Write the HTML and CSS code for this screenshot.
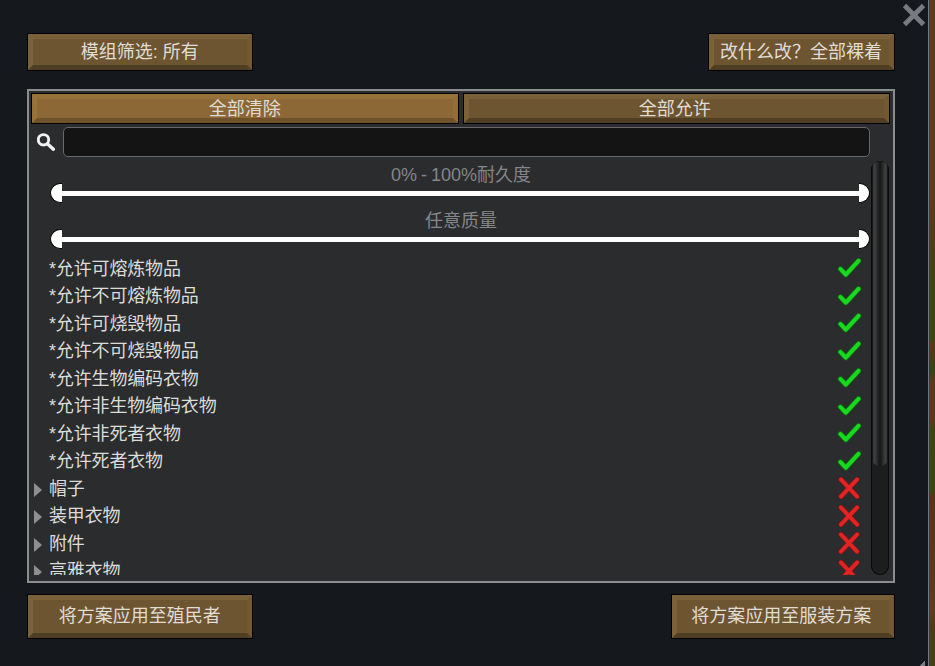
FILE: index.html
```html
<!DOCTYPE html>
<html lang="zh">
<head>
<meta charset="utf-8">
<title>服装筛选</title>
<link rel="stylesheet" href="styles.css">
</head>
<body>
<svg class="defs" width="0" height="0" aria-hidden="true">
  <symbol id="check" viewBox="0 0 24 22">
    <path d="M3.5 12 L8.8 17.6 L21.5 3.8" fill="none" stroke="#0d6a12" stroke-width="5.6" stroke-linecap="round" stroke-linejoin="round"/>
    <path d="M3.5 12 L8.8 17.6 L21.5 3.8" fill="none" stroke="#1ad81f" stroke-width="4" stroke-linecap="round" stroke-linejoin="round"/>
  </symbol>
  <symbol id="cross" viewBox="0 0 24 22">
    <path d="M4 2.5 L20 19.5 M20 2.5 L4 19.5" fill="none" stroke="#861616" stroke-width="5.2" stroke-linecap="round"/>
    <path d="M4 2.5 L20 19.5 M20 2.5 L4 19.5" fill="none" stroke="#e32424" stroke-width="3.8" stroke-linecap="round"/>
  </symbol>
</svg>
<main class="window">
  <svg class="close" viewBox="0 0 24 24" aria-label="关闭"><path d="M2.5 2.5 L21.5 21.5 M21.5 2.5 L2.5 21.5" fill="none" stroke="#777b7f" stroke-width="4.8"/></svg>
  <div class="bar">
    <button class="btn btn-wide">模组筛选: 所有</button>
    <button class="btn btn-what">改什么改？全部裸着</button>
  </div>
  <section class="panel">
    <div class="tabs">
      <button class="btn tab-on">全部清除</button>
      <button class="btn tab-off">全部允许</button>
    </div>
    <div class="search">
      <svg class="lens" viewBox="0 0 18 18"><circle cx="6.5" cy="6.8" r="5.2" fill="none" stroke="#f2f2f2" stroke-width="2.9"/><path d="M10.6 11 L16.4 16.2" stroke="#f2f2f2" stroke-width="3.4" stroke-linecap="round"/></svg>
      <div class="input"></div>
    </div>
    <div class="body">
      <div class="scroll">
        <div class="range">
          <div class="range-label">0% - 100%耐久度</div>
          <div class="track"><span class="knob knob-l"></span><span class="line"></span><span class="knob knob-r"></span></div>
        </div>
        <div class="range">
          <div class="range-label">任意质量</div>
          <div class="track"><span class="knob knob-l"></span><span class="line"></span><span class="knob knob-r"></span></div>
        </div>
        <ul class="list">
          <li class="row"><span class="slot"></span><span class="name">*允许可熔炼物品</span><svg class="mark"><use href="#check"/></svg></li>
          <li class="row"><span class="slot"></span><span class="name">*允许不可熔炼物品</span><svg class="mark"><use href="#check"/></svg></li>
          <li class="row"><span class="slot"></span><span class="name">*允许可烧毁物品</span><svg class="mark"><use href="#check"/></svg></li>
          <li class="row"><span class="slot"></span><span class="name">*允许不可烧毁物品</span><svg class="mark"><use href="#check"/></svg></li>
          <li class="row"><span class="slot"></span><span class="name">*允许生物编码衣物</span><svg class="mark"><use href="#check"/></svg></li>
          <li class="row"><span class="slot"></span><span class="name">*允许非生物编码衣物</span><svg class="mark"><use href="#check"/></svg></li>
          <li class="row"><span class="slot"></span><span class="name">*允许非死者衣物</span><svg class="mark"><use href="#check"/></svg></li>
          <li class="row"><span class="slot"></span><span class="name">*允许死者衣物</span><svg class="mark"><use href="#check"/></svg></li>
          <li class="row"><span class="slot"><i class="arrow"></i></span><span class="name">帽子</span><svg class="mark"><use href="#cross"/></svg></li>
          <li class="row"><span class="slot"><i class="arrow"></i></span><span class="name">装甲衣物</span><svg class="mark"><use href="#cross"/></svg></li>
          <li class="row"><span class="slot"><i class="arrow"></i></span><span class="name">附件</span><svg class="mark"><use href="#cross"/></svg></li>
          <li class="row"><span class="slot"><i class="arrow"></i></span><span class="name">高雅衣物</span><svg class="mark"><use href="#cross"/></svg></li>
        </ul>
      </div>
      <div class="scrollbar"><div class="thumb"></div></div>
    </div>
  </section>
  <div class="bar bar-bottom">
    <button class="btn btn-wide">将方案应用至殖民者</button>
    <button class="btn btn-apply">将方案应用至服装方案</button>
  </div>
  <span class="grip"></span>
</main>
<div class="world"></div>
</body>
</html>
```
FILE: styles.css
```css
* { box-sizing: border-box; }
html, body { margin: 0; height: 100%; }
body {
  display: flex;
  width: 935px;
  height: 666px;
  overflow: hidden;
  background: #15191e;
  font-family: "Liberation Sans", "Noto Sans CJK SC", sans-serif;
  font-size: 18px;
  color: #dddcd8;
}
.defs { position: absolute; }
.window {
  position: relative;
  width: 929px;
  padding: 33px 33px 0 27px;
  background: #15191e;
  border-right: 1px solid #6b7885;
}
.world {
  flex: 1;
  background: linear-gradient(180deg,
    #5b3a1f 0, #5b3a1f 205px, #4e3d1b 250px, #3f4416 290px, #3e4416 338px,
    #57361c 345px, #4a3a18 358px, #36431a 370px, #5a3820 383px, #5c381f 420px,
    #3f4416 430px, #3e4516 490px, #57331b 497px, #5d3a22 610px, #4b3c1a 630px, #46401a 666px);
}
.close {
  position: absolute;
  left: 901.5px;
  top: 3px;
  width: 24px;
  height: 24px;
}
.grip {
  position: absolute;
  right: 3px;
  bottom: 0;
  width: 6px;
  height: 6px;
  background: linear-gradient(135deg, transparent 50%, #7b7f83 50%);
}
.bar {
  display: flex;
  justify-content: space-between;
  height: 37.5px;
  margin-bottom: 18.5px;
  padding-right: 0.5px;
}
.bar-bottom { height: 44.5px; margin: 11px 0 0; }
.btn {
  padding: 0;
  font: inherit;
  color: #e0ddd5;
  background: #6c5530;
  border-style: solid;
  border-width: 5px;
  border-color: #7a6038 #73592f #4f3e22 #7c6238;
  box-shadow: 0 0 0 1px #000;
  line-height: 1;
  margin: 1px;
}
.btn-wide { width: 223.5px; }
.btn-what { width: 185px; }
.btn-apply { width: 221.5px; padding-right: 3px; }
.panel {
  height: 494px;
  padding: 2px 4px 6px 2px;
  background: #2b2c2e;
  border: 2px solid #8b8c8d;
  display: flex;
  flex-direction: column;
}
.tabs {
  display: grid;
  grid-template-columns: 1fr 1fr;
  gap: 4px;
  height: 31px;
  margin-right: -1px;
}
.tab-off { padding-right: 3px; }
.tab-on {
  background: #8b6835;
  border-color: #967138 #936f37 #6e5229 #977239;
}
.search {
  display: flex;
  align-items: center;
  height: 30px;
  margin: 3px 19px 0 6px;
}
.lens { width: 18px; height: 18px; flex: none; margin-right: 8px; }
.input {
  flex: 1;
  height: 30px;
  background: #141414;
  border: 1px solid #66686a;
  border-radius: 5px;
}
.body {
  flex: 1;
  min-height: 0;
  display: flex;
  gap: 1px;
  margin-top: 4px;
  height: 414px;
}
.scroll {
  flex: 1;
  min-width: 0;
  height: 414px;
  overflow: hidden;
}
.range { margin-left: 19px; height: 46px; }
.range-label {
  height: 26px;
  padding: 1px 0 0 2px;
  line-height: 26px;
  text-align: center;
  word-spacing: -1px;
  color: #84868a;
}
.track {
  display: flex;
  align-items: center;
  height: 20px;
  margin-top: -4px;
}
.knob {
  flex: none;
  width: 12px;
  height: 20px;
  background: #fff;
  border: 1px solid #000;
}
.knob-l { border-right: 0; border-radius: 10px 0 0 10px; }
.knob-r { width: 11px; border-left: 0; border-radius: 0 10px 10px 0; }
.line { flex: 1; height: 5px; background: #fff; }
.list { list-style: none; margin: 1.25px 0 0; padding: 0; }
.row {
  display: flex;
  align-items: center;
  height: 27.5px;
  padding-right: 9px;
}
.slot { width: 18px; flex: none; padding-left: 3px; display: flex; align-items: center; }
.arrow {
  width: 0;
  height: 0;
  margin-top: 3px;
  border-left: 8.5px solid #8f8f8f;
  border-top: 7px solid transparent;
  border-bottom: 7px solid transparent;
}
.name { flex: 1; white-space: nowrap; margin-bottom: 3px; letter-spacing: -0.15px; }
.mark { width: 24px; height: 22px; flex: none; }
.scrollbar {
  flex: none;
  width: 18px;
  height: 414px;
  background: #1c1d1d;
  border-radius: 9px;
  box-shadow: inset 0 0 0 1px #0a0a0a;
  overflow: hidden;
}
.thumb {
  height: 305px;
  border-radius: 9px;
  background: linear-gradient(90deg, #0a0a0a 0, #0a0a0a 6%, #444 16%, #151515 50%, #444 84%, #0a0a0a 94%, #0a0a0a 100%);
}
```
